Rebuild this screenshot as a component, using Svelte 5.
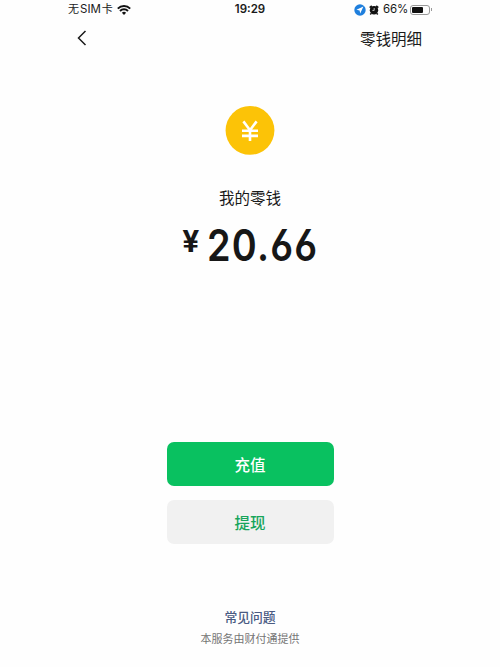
<script>
  let { balance = '20.66', time = '19:29', battery = 66 } = $props();
</script>

<div class="screen">
  <header class="status">
    <div class="carrier">
      <span>无<b>SIM</b>卡</span>
      <svg class="wifi" viewBox="0 0 14 10" width="14" height="10">
        <path d="M.8 3.6a8.8 8.8 0 0 1 12.4 0" />
        <path d="M3 6a5.7 5.7 0 0 1 8 0" />
        <path class="dot" d="M4.9 7.7a3.1 3.1 0 0 1 4.2 0L7 9.9z" />
      </svg>
    </div>
    <span class="time">{time}</span>
    <div class="indicators">
      <svg viewBox="0 0 12 12" width="12" height="12">
        <circle cx="6" cy="6" r="5.7" fill="#1f7fdd" />
        <path d="M9.4 2.6 2.4 5.8l3.2.6.6 3.2z" fill="#fff" />
      </svg>
      <svg class="alarm" viewBox="0 0 10 10" width="10" height="10">
        <path d="M.7 2.6 2.8.9M9.3 2.6 7.2.9M2.1 8.4 1.3 9.5M7.9 8.4l.8 1.1" stroke="#111" stroke-width="1.6" />
        <circle cx="5" cy="5.2" r="4.2" fill="#111" />
        <path d="M5.2 3v2.4H3.4" fill="none" stroke="#fff" stroke-width=".7" />
      </svg>
      <span class="percent">{battery}%</span>
      <div class="battery">
        <div class="cell"><div class="level" style="width: {battery}%"></div></div>
        <div class="cap"></div>
      </div>
    </div>
  </header>

  <nav>
    <button class="back" aria-label="返回">
      <svg viewBox="0 0 10 16" width="10" height="16">
        <path d="M8.5 1 1.5 8l7 7" fill="none" stroke="#1a1a1a" stroke-width="1.5" />
      </svg>
    </button>
    <button class="detail">零钱明细</button>
  </nav>

  <main>
    <svg class="coin" viewBox="0 0 50 50" width="50" height="50">
      <circle cx="25" cy="25.4" r="24.4" fill="#fcc307" />
      <path d="M18.4 16.4 25 25.2 31.6 16.4M25 25v11M17 25.8h16M17 30.9h16" fill="none" stroke="#fff" stroke-width="2.6" />
    </svg>
    <h1>我的零钱</h1>
    <div class="amount"><span class="yen">¥</span><span class="number">{balance}</span></div>
  </main>

  <div class="actions">
    <button class="primary">充值</button>
    <button class="secondary">提现</button>
  </div>

  <footer>
    <button class="faq">常见问题</button>
    <p>本服务由财付通提供</p>
  </footer>
</div>

<style>
  :global(body) { background: #fefefe; }

  .screen {
    width: 376px; height: 667px; margin: 0 auto;
    display: flex; flex-direction: column; align-items: center;
    font-family: Inter, "Noto Sans CJK SC", sans-serif; color: #1a1a1a;
  }

  button { border: 0; padding: 0; background: none; font: inherit; color: inherit; cursor: pointer; }
  svg { display: block; flex: none; }

  .status {
    width: 100%; height: 19px; padding: 0 6px; box-sizing: border-box;
    display: grid; grid-template-columns: 1fr auto 1fr; align-items: center;
    font-size: 12px; line-height: 19px;
  }

  .carrier { display: flex; align-items: center; gap: 4px; font-size: 11px; white-space: nowrap; }
  .carrier b { font-weight: 400; font-size: 11.5px; margin: 0 1px; }
  .wifi { fill: none; stroke: #111; stroke-width: 2; }
  .wifi .dot { fill: #111; stroke: none; }

  .time { font-size: 11.5px; font-weight: 600; }

  .indicators { display: flex; align-items: center; justify-content: flex-end; }
  .alarm { margin: 0 4px 0 3px; }
  .percent { font-size: 11.5px; letter-spacing: -0.2px; }

  .battery { display: flex; align-items: center; margin-left: 2px; }
  .cell {
    width: 20px; height: 10px; padding: 1px; box-sizing: border-box;
    border: 1px solid #999; border-radius: 3px;
  }
  .level { height: 100%; background: #111; border-radius: 1px; }
  .cap { width: 1px; height: 3px; margin-left: 1px; background: #999; }

  nav {
    width: 100%; height: 38px; padding: 0 16px 0 15px; box-sizing: border-box;
    display: flex; align-items: center; justify-content: space-between;
  }
  .detail { font-size: 15.5px; }

  main { display: flex; flex-direction: column; align-items: center; margin-top: 48px; }

  h1 { margin: 32px 0 0; font-size: 15.5px; font-weight: 400; line-height: 24px; }

  .amount { display: flex; align-items: flex-start; margin-top: 8px; height: 56px; color: #171717; }
  .yen { margin-right: 3px; font-family: Roboto, sans-serif; font-size: 31px; font-weight: 700; line-height: 46px; }
  .number {
    font-size: 44px; font-weight: 600; line-height: 52px; letter-spacing: 1.4px;
    font-feature-settings: "cv03", "ss01";
    transform: scaleX(0.86); margin: 0 -10px 0 -4px;
  }

  .actions { display: flex; flex-direction: column; gap: 14px; margin-top: 167px; }
  .actions button {
    width: 167px; height: 44px; border-radius: 7px;
    font-size: 15.5px; font-weight: 500;
  }
  .actions .primary { background: #09c160; color: #fff; }
  .actions .secondary { background: #f1f1f1; color: #17a55b; }

  footer { display: flex; flex-direction: column; align-items: center; margin-top: 64px; }
  .faq { font-size: 12.8px; font-weight: 500; line-height: 20px; color: #4a5b83; }
  p { margin: 2px 0 0; font-size: 11px; line-height: 18px; color: #757575; }
</style>
